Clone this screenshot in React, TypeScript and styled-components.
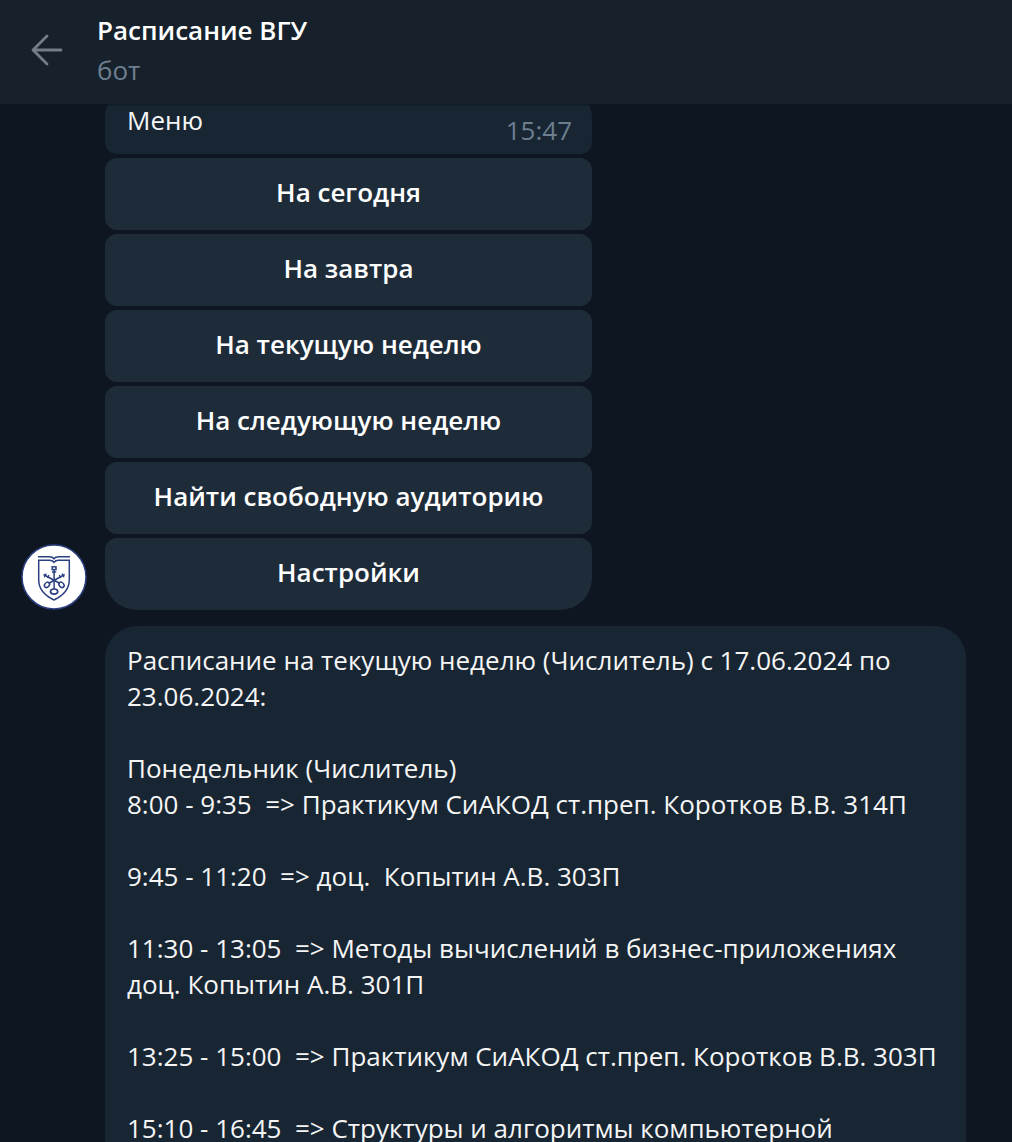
import React from "react";
import styled, { createGlobalStyle } from "styled-components";

const GlobalStyle = createGlobalStyle`
  * {
    box-sizing: border-box;
  }

  body {
    margin: 0;
    background: #0e1621;
    color: #f5f5f5;
    font-family: "Open Sans", "Noto Sans", sans-serif;
    font-size: 26px;
    line-height: 36px;
  }
`;

const Page = styled.div`
  display: flex;
  flex-direction: column;
  height: 100vh;
  overflow: hidden;
`;

const Header = styled.header`
  position: relative;
  z-index: 1;
  display: flex;
  flex: none;
  align-items: center;
  gap: 32px;
  height: 104px;
  padding: 0 27px;
  background: #17212b;
  box-shadow: 0 2px 0 rgba(14, 22, 33, 0.45);
`;

const BackButton = styled.button`
  display: flex;
  padding: 0;
  border: 0;
  background: none;
  color: #737d87;
  cursor: pointer;
`;

const Heading = styled.div`
  display: flex;
  flex-direction: column;
  gap: 4px;
  padding-bottom: 4px;
`;

const Title = styled.h1`
  margin: 0;
  color: #ffffff;
  font-size: 26px;
  font-weight: 600;
`;

const Status = styled.span`
  color: #6d7f8f;
`;

const Chat = styled.main`
  display: flex;
  flex: 1 0 auto;
  flex-direction: column;
  gap: 16px;
  margin-top: -18px;
  padding: 0 46px 0 21px;
`;

const Message = styled.article`
  display: grid;
  grid-template-columns: 66px minmax(0, 1fr);
  gap: 18px;
  align-items: end;
`;

const MenuStack = styled.div`
  display: flex;
  flex-direction: column;
  gap: 4px;
  width: 100%;
  max-width: 487px;
`;

const Bubble = styled.div<{ $shape: "withButtons" | "continued" }>`
  display: flex;
  grid-column: 2;
  justify-content: space-between;
  padding: 16px 20px 16px 22px;
  border-radius: ${(p) => (p.$shape === "withButtons" ? "32px 32px 12px 12px" : "32px 32px 0 0")};
  background: #182533;
`;

const Text = styled.p`
  margin: 0;
  white-space: pre-wrap;
`;

const Time = styled.time`
  align-self: flex-end;
  margin-bottom: -10px;
  color: #6d7f8f;
`;

const MenuButton = styled.button`
  height: 72px;
  padding: 0 16px 4px;
  border: 0;
  border-radius: 12px;
  background: #1e2c3a;
  color: #ffffff;
  font: inherit;
  font-weight: 600;
  cursor: pointer;

  &:last-child {
    border-radius: 12px 12px 32px 32px;
  }
`;

const menuItems = [
  "На сегодня",
  "На завтра",
  "На текущую неделю",
  "На следующую неделю",
  "Найти свободную аудиторию",
  "Настройки",
];

const schedule = [
  "Расписание на текущую неделю (Числитель) с 17.06.2024 по 23.06.2024:",
  "",
  "Понедельник (Числитель)",
  "8:00 - 9:35  => Практикум СиАКОД ст.преп. Коротков В.В. 314П",
  "",
  "9:45 - 11:20  => доц.  Копытин А.В. 303П",
  "",
  "11:30 - 13:05  => Методы вычислений в бизнес-приложениях доц. Копытин А.В. 301П",
  "",
  "13:25 - 15:00  => Практикум СиАКОД ст.преп. Коротков В.В. 303П",
  "",
  "15:10 - 16:45  => Структуры и алгоритмы компьютерной",
].join("\n");

function BackArrow() {
  return (
    <svg width="38" height="38" viewBox="0 0 38 38" fill="none" stroke="currentColor" strokeWidth="2.8" strokeLinecap="round" strokeLinejoin="round" aria-hidden="true">
      <path d="M34 17H6.500M20 3L6 17l14 14" />
    </svg>
  );
}

function Avatar() {
  return (
    <svg width="66" height="66" viewBox="0 0 66 66" fill="none" stroke="#2c4080" strokeWidth="1.5" aria-hidden="true">
      <circle cx="33" cy="33" r="32" fill="#ffffff" />
      <path d="M17 12.800h11.500q3 0 4.500 2q1.500-2 4.500-2H49" />
      <path d="M17.700 16.300h10.800q3 0 4.500 2q1.500-2 4.500-2h10.800V36c0 10-6 15.500-15.300 20C23.700 51.500 17.700 46 17.700 36z" />
      <rect x="31.200" y="22.800" width="3.800" height="2.800" />
      <path d="M33.100 25.500V45M31 28h4.200" />
      <ellipse cx="33.100" cy="47.600" rx="3.600" ry="2.600" strokeWidth="1.700" />
      <path d="M22.500 30.500L39 39.500M43.700 30.500L27.500 39.500" />
      <path d="M25.300 29.500l-2 3.700M28 31l-1.500 3M41 29.500l2 3.700M38.300 31l1.500 3" strokeWidth="1.300" />
      <ellipse cx="26" cy="40.800" rx="3" ry="2.200" transform="rotate(-50 26 40.800)" />
      <ellipse cx="40.500" cy="40.800" rx="3" ry="2.200" transform="rotate(50 40.500 40.800)" />
    </svg>
  );
}

export default function App() {
  return (
    <Page>
      <GlobalStyle />
      <Header>
        <BackButton type="button" aria-label="Назад">
          <BackArrow />
        </BackButton>
        <Heading>
          <Title>Расписание ВГУ</Title>
          <Status>бот</Status>
        </Heading>
      </Header>
      <Chat>
        <Message>
          <Avatar />
          <MenuStack>
            <Bubble $shape="withButtons">
              <Text>Меню</Text>
              <Time>15:47</Time>
            </Bubble>
            {menuItems.map((item) => (
              <MenuButton key={item} type="button">
                {item}
              </MenuButton>
            ))}
          </MenuStack>
        </Message>
        <Message>
          <Bubble $shape="continued">
            <Text>{schedule}</Text>
          </Bubble>
        </Message>
      </Chat>
    </Page>
  );
}
